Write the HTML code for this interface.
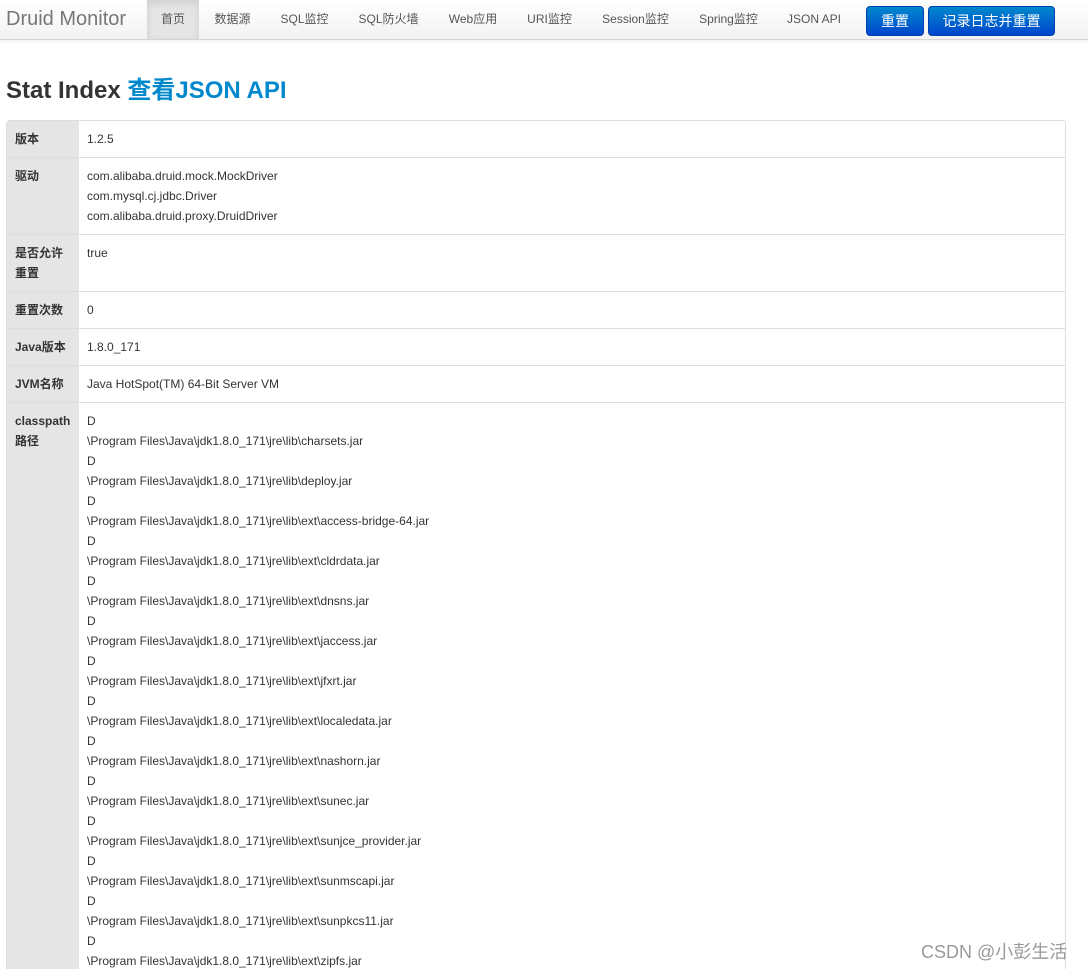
<!DOCTYPE html>
<html style="height:969px;overflow:hidden"><head><meta charset="utf-8">
<style>
*{box-sizing:border-box;margin:0;padding:0}
body{width:1088px;height:969px;overflow:hidden;background:#fff;font-family:"Liberation Sans","Noto Sans CJK SC",sans-serif;font-size:12px;color:#333;position:relative}
.nav{height:40px;background:linear-gradient(#fff,#f2f2f2);border-bottom:1px solid #d4d4d4;box-shadow:0 1px 4px rgba(0,0,0,.07);position:relative}
.brand{position:absolute;left:6px;top:8px;font-size:20px;color:#777}
.nav a{position:absolute;top:0;height:39px;line-height:39px;font-size:12px;color:#555;text-align:center}
.nav a.act{background:#e5e5e5;box-shadow:inset 0 3px 8px rgba(0,0,0,.1)}
.btn{position:absolute;top:6px;height:30px;line-height:29px;color:#fff;font-size:14px;text-align:center;border-radius:4px;background:linear-gradient(#0088cc,#0044cc);border:1px solid #0040b0}
h1{position:absolute;left:6px;top:70px;font-size:24px;font-weight:bold;color:#333}
h1 span{color:#0088cc}
.clip{position:absolute;left:0;top:120px;width:1088px;height:849px;overflow:hidden}
table{position:absolute;left:6px;top:0;width:1060px;border-collapse:separate;border-spacing:0;border:1px solid #ddd;border-radius:4px}
td{padding:8px 8px;line-height:20px;vertical-align:top;border-top:1px solid #ddd}
tr:first-child td{border-top:none}
td.k{width:72px;background:#e5e5e5;font-weight:bold;padding-left:8px}
.wm{position:absolute;left:921px;top:938px;font-size:18px;color:#999}
</style></head><body>
<div class="nav">
<div class="brand">Druid Monitor</div>
<a class="act" style="left:147px;width:52px">首页</a>
<a style="left:199px;width:67px">数据源</a>
<a style="left:266px;width:77px">SQL监控</a>
<a style="left:343px;width:91px">SQL防火墙</a>
<a style="left:434px;width:78px">Web应用</a>
<a style="left:512px;width:75px">URI监控</a>
<a style="left:587px;width:97px">Session监控</a>
<a style="left:684px;width:89px">Spring监控</a>
<a style="left:773px;width:82px">JSON API</a>
<div class="btn" style="left:866px;width:58px">重置</div>
<div class="btn" style="left:928px;width:127px">记录日志并重置</div>
</div>
<h1>Stat Index <span>查看JSON API</span></h1>
<div class="clip">
<table>
<tr><td class="k">版本</td><td>1.2.5</td></tr>
<tr><td class="k">驱动</td><td>com.alibaba.druid.mock.MockDriver<br>com.mysql.cj.jdbc.Driver<br>com.alibaba.druid.proxy.DruidDriver</td></tr>
<tr><td class="k">是否允许重置</td><td>true</td></tr>
<tr><td class="k">重置次数</td><td>0</td></tr>
<tr><td class="k">Java版本</td><td>1.8.0_171</td></tr>
<tr><td class="k">JVM名称</td><td>Java HotSpot(TM) 64-Bit Server VM</td></tr>
<tr><td class="k">classpath路径</td><td>D<br>\Program Files\Java\jdk1.8.0_171\jre\lib\charsets.jar<br>D<br>\Program Files\Java\jdk1.8.0_171\jre\lib\deploy.jar<br>D<br>\Program Files\Java\jdk1.8.0_171\jre\lib\ext\access-bridge-64.jar<br>D<br>\Program Files\Java\jdk1.8.0_171\jre\lib\ext\cldrdata.jar<br>D<br>\Program Files\Java\jdk1.8.0_171\jre\lib\ext\dnsns.jar<br>D<br>\Program Files\Java\jdk1.8.0_171\jre\lib\ext\jaccess.jar<br>D<br>\Program Files\Java\jdk1.8.0_171\jre\lib\ext\jfxrt.jar<br>D<br>\Program Files\Java\jdk1.8.0_171\jre\lib\ext\localedata.jar<br>D<br>\Program Files\Java\jdk1.8.0_171\jre\lib\ext\nashorn.jar<br>D<br>\Program Files\Java\jdk1.8.0_171\jre\lib\ext\sunec.jar<br>D<br>\Program Files\Java\jdk1.8.0_171\jre\lib\ext\sunjce_provider.jar<br>D<br>\Program Files\Java\jdk1.8.0_171\jre\lib\ext\sunmscapi.jar<br>D<br>\Program Files\Java\jdk1.8.0_171\jre\lib\ext\sunpkcs11.jar<br>D<br>\Program Files\Java\jdk1.8.0_171\jre\lib\ext\zipfs.jar</td></tr>
</table>
</div>
<div class="wm">CSDN @小彭生活</div>
</body></html>
